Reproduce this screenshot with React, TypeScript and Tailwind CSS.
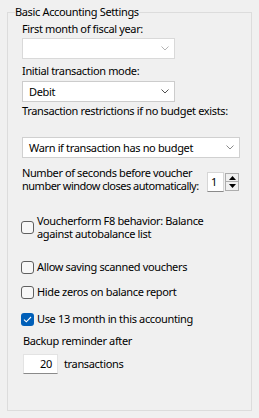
import type { ReactNode } from "react";

function Chevron({ color }: { color: string }) {
    return (
        <svg width="8" height="5" viewBox="0 0 8 5" className="flex-none">
            <path d="M0.5 0.5 L4 4 L7.5 0.5" fill="none" stroke={color} strokeWidth="1" />
        </svg>
    );
}

function Combo({ value, width, chevron, border }: { value?: string; width: string; chevron: string; border: string }) {
    return (
        <div className={`flex h-[21px] items-center justify-between border bg-white pl-[6px] pr-[5px] ${width} ${border}`}>
            <span className="leading-none">{value ?? ""}</span>
            <Chevron color={chevron} />
        </div>
    );
}

function Check({ checked, children, twoLine }: { checked?: boolean; children: ReactNode; twoLine?: boolean }) {
    return (
        <div className={`flex items-center ${twoLine ? "leading-[13px]" : "h-4 leading-4"}`}>
            {checked ? (
                <div className="ml-[-1px] mr-[3px] flex h-[13px] w-[13px] flex-none items-center justify-center rounded-[3px] bg-[#005fb8]">
                    <svg width="9" height="7" viewBox="0 0 9 7">
                        <path d="M1 3.6 L3.3 5.8 L8 1" fill="none" stroke="#fff" strokeWidth="1.1" />
                    </svg>
                </div>
            ) : (
                <div className="ml-[-1px] mr-[3px] h-[13px] w-[13px] flex-none rounded-[3px] border border-[#5f5f5f] bg-[#f7f7f7]" />
            )}
            <span className="whitespace-nowrap">{children}</span>
        </div>
    );
}

export default function App() {
    return (
        <div
            className="h-[418px] w-[259px] bg-[#f0f0f0] pt-[4px] pl-[7px] text-[11px] tracking-[-0.35px] text-black"
            style={{ fontFamily: '"Noto Sans", "Open Sans", sans-serif' }}
        >
            <fieldset className="h-[407px] w-[245px] border border-[#dcdcdc] px-0">
                <legend className="ml-[7px] h-4 leading-4">Basic Accounting Settings</legend>
                <div className="flex flex-col pl-[14px]">
                    <div className="mt-[1px] h-4 leading-4">First month of fiscal year:</div>
                    <div className="mt-[1px]">
                        <Combo width="w-[153px]" chevron="#b4b4b4" border="border-[#d9d9d9]" />
                    </div>
                    <div className="mt-[4px] h-4 leading-4">Initial transaction mode:</div>
                    <div className="mt-[2px]">
                        <Combo value="Debit" width="w-[153px]" chevron="#505050" border="border-[#cccccc]" />
                    </div>
                    <div className="mt-[1px] h-4 whitespace-nowrap leading-4">Transaction restrictions if no budget exists:</div>
                    <div className="mt-[18px]">
                        <Combo value="Warn if transaction has no budget" width="w-[218px]" chevron="#8a8a8a" border="border-[#d0d0d0]" />
                    </div>
                    <div className="mt-[8px] grid grid-cols-[185px_33px] items-start">
                        <div className="whitespace-nowrap leading-[13px]">
                            <div className="tracking-[-0.4px]">Number of seconds before voucher</div>
                            <div className="tracking-[-0.5px]">number window closes automatically:</div>
                        </div>
                        <div className="mt-[6px] flex">
                            <div className="flex h-[20px] w-[17px] items-center border border-[#d6d6d6] border-b-[#8a8a8a] bg-white pl-[3px]">
                                1
                            </div>
                            <div className="ml-[1px] mt-[1px] flex h-[18px] w-[14px] flex-col">
                                <div className="flex h-[9px] items-center justify-center border border-[#adadad] bg-[#f0f0f0]">
                                    <svg width="7" height="4" viewBox="0 0 7 4">
                                        <path d="M0 4 L3.5 0 L7 4 Z" fill="#000" />
                                    </svg>
                                </div>
                                <div className="flex h-[9px] items-center justify-center border border-t-0 border-[#adadad] bg-[#f0f0f0]">
                                    <svg width="7" height="4" viewBox="0 0 7 4">
                                        <path d="M0 0 L3.5 4 L7 0 Z" fill="#000" />
                                    </svg>
                                </div>
                            </div>
                        </div>
                    </div>
                    <div className="mt-[22px]">
                        <Check twoLine>
                            Voucherform F8 behavior: Balance
                            <br />
                            against autobalance list
                        </Check>
                    </div>
                    <div className="mt-[19px]">
                        <Check>Allow saving scanned vouchers</Check>
                    </div>
                    <div className="mt-[9px]">
                        <Check>Hide zeros on balance report</Check>
                    </div>
                    <div className="mt-[11px]">
                        <Check checked>Use 13 month in this accounting</Check>
                    </div>
                    <div className="ml-[1px] mt-[6px] h-4 leading-4">Backup reminder after</div>
                    <div className="ml-[1px] mt-[5px] flex items-center">
                        <div className="flex h-[20px] w-[35px] items-center justify-end border border-[#e3e3e3] border-b-[#8a8a8a] bg-white pr-[5px]">
                            20
                        </div>
                        <span className="ml-[6px]">transactions</span>
                    </div>
                </div>
            </fieldset>
        </div>
    );
}
